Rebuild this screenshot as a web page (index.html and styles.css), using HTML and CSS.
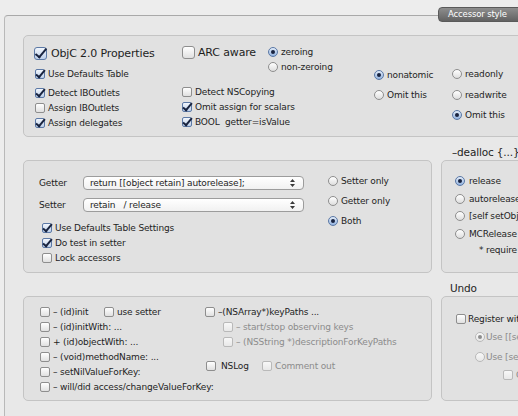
FILE: index.html
```html
<!DOCTYPE html>
<html lang="en">
<head>
    <meta charset="UTF-8">
    <title>Accessorizer - Accessor style</title>
    <link rel="stylesheet" href="styles.css">
</head>
<body>

<div class="window">
    <div class="tabview">
        <div class="tab">Accessor style</div>

        <div class="box b1">
            <div class="col col-a">
                <div class="row big"><span class="cb big on"></span>ObjC 2.0 Properties</div>
                <div class="row ind1 sp4"><span class="cb on"></span>Use Defaults Table</div>
                <div class="row ind1 sp4"><span class="cb on"></span>Detect IBOutlets</div>
                <div class="row ind1"><span class="cb"></span>Assign IBOutlets</div>
                <div class="row ind1"><span class="cb on"></span>Assign delegates</div>
            </div>
            <div class="col col-b">
                <div class="row big gap3"><span class="cb big"></span>ARC aware</div>
                <div class="row sp-b"><span class="cb"></span>Detect NSCopying</div>
                <div class="row"><span class="cb on"></span>Omit assign for scalars</div>
                <div class="row"><span class="cb on"></span>BOOL&nbsp; getter=isValue</div>
            </div>
            <div class="col col-c">
                <div class="row"><span class="rd on"></span>zeroing</div>
                <div class="row"><span class="rd"></span>non-zeroing</div>
            </div>
            <div class="col col-d">
                <div class="row r20"><span class="rd on"></span>nonatomic</div>
                <div class="row r20"><span class="rd"></span>Omit this</div>
            </div>
            <div class="col col-e">
                <div class="row r20"><span class="rd"></span>readonly</div>
                <div class="row r20"><span class="rd"></span>readwrite</div>
                <div class="row r20"><span class="rd on"></span>Omit this</div>
            </div>
        </div>

        <div class="cols">
            <div class="colL">
                <div class="title"></div>
                <div class="box b2">
                    <div class="b2-left">
                        <div class="field">
                            <span class="lbl">Getter</span>
                            <div class="popup">
                                <span>return [[object retain] autorelease];</span>
                                <svg width="5" height="8" viewBox="0 0 5 8"><path d="M2.5 0 5 3H0z M0 5h5L2.5 8z" fill="#3a3a3a"/></svg>
                            </div>
                        </div>
                        <div class="field">
                            <span class="lbl">Setter</span>
                            <div class="popup">
                                <span>retain&nbsp;&nbsp; / release</span>
                                <svg width="5" height="8" viewBox="0 0 5 8"><path d="M2.5 0 5 3H0z M0 5h5L2.5 8z" fill="#3a3a3a"/></svg>
                            </div>
                        </div>
                        <div class="checks">
                            <div class="row"><span class="cb on"></span>Use Defaults Table Settings</div>
                            <div class="row"><span class="cb on"></span>Do test in setter</div>
                            <div class="row"><span class="cb"></span>Lock accessors</div>
                        </div>
                    </div>
                    <div class="b2-right">
                        <div class="row r20"><span class="rd"></span>Setter only</div>
                        <div class="row r20"><span class="rd"></span>Getter only</div>
                        <div class="row r20"><span class="rd on"></span>Both</div>
                    </div>
                </div>

                <div class="title"></div>
                <div class="box b3">
                    <div class="col b3-a">
                        <div class="row"><span class="pair"><span class="cb"></span>– (id)init</span><span class="cb"></span>use setter</div>
                        <div class="row"><span class="cb"></span>– (id)initWith: ...</div>
                        <div class="row"><span class="cb"></span>+ (id)objectWith: ...</div>
                        <div class="row"><span class="cb"></span>– (void)methodName: ...</div>
                        <div class="row"><span class="cb"></span>– setNilValueForKey:</div>
                        <div class="row"><span class="cb"></span>– will/did access/changeValueForKey:</div>
                    </div>
                    <div class="col b3-b">
                        <div class="row"><span class="cb"></span>–(NSArray*)keyPaths ...</div>
                        <div class="row sub off"><span class="cb"></span>– start/stop observing keys</div>
                        <div class="row sub off"><span class="cb"></span>– (NSString *)descriptionForKeyPaths</div>
                        <div class="row nslog">
                            <span class="pair wide"><span class="cb"></span>NSLog</span>
                            <span class="pair off"><span class="cb"></span>Comment out</span>
                        </div>
                    </div>
                </div>
            </div>

            <div class="colR">
                <div class="title t-dealloc">–dealloc {...}</div>
                <div class="box b4">
                    <div class="row r17"><span class="rd on"></span>release</div>
                    <div class="row r17"><span class="rd"></span>autorelease</div>
                    <div class="row r17"><span class="rd"></span>[self setObj</div>
                    <div class="row r17"><span class="rd"></span>MCRelease</div>
                    <div class="row note">* require</div>
                </div>

                <div class="title">Undo</div>
                <div class="box b5">
                    <div class="row tight"><span class="cb"></span>Register wit</div>
                    <div class="row r20 off radio-sub"><span class="rd on"></span>Use [[se</div>
                    <div class="row r20 off radio-sub"><span class="rd"></span>Use [sel</div>
                    <div class="row off group"><span class="cb"></span>G</div>
                </div>
            </div>
        </div>
    </div>
</div>

</body>
</html>
```

FILE: styles.css
```css
* {
    box-sizing: border-box;
}
body {
    margin: 0;
    width: 518px;
    height: 416px;
    overflow: hidden;
    background-color: #ededed;
    font-family: "DejaVu Sans", sans-serif;
    font-size: 9px;
    letter-spacing: -0.15px;
    color: #1e1e1e;
}
.window {
    padding: 15px 0 0 4px;
}
.tabview {
    position: relative;
    width: 620px;
    height: 420px;
    border-top: 1px solid #a9a9a9;
    border-left: 1px solid #b9b9b9;
    border-top-left-radius: 4px;
    background-color: #e8e8e8;
    padding: 19px 0 0 18px;
}
.tab {
    position: absolute;
    top: -9px;
    left: 433px;
    width: 100px;
    height: 15px;
    border: 1px solid #5a5a5a;
    border-radius: 4px;
    background: linear-gradient(#8e8e8e, #626262);
    color: #fff;
    font-size: 8.5px;
    line-height: 13px;
    padding-left: 9px;
}
.box {
    border: 1px solid #c4c4c4;
    border-radius: 5px;
    background-color: #e1e1e1;
}

/* rows, checkboxes, radios */
.row {
    display: flex;
    align-items: center;
    height: 15px;
    gap: 3px;
    white-space: nowrap;
}
.row.big {
    height: 18px;
    font-size: 11px;
    gap: 4px;
}
.row.gap3 {
    gap: 3px;
}
.r20 {
    height: 20px;
}
.r17 {
    height: 17.5px;
}
.cb {
    position: relative;
    flex: none;
    width: 10px;
    height: 10px;
    border: 1px solid #8e8e8e;
    border-radius: 2px;
    background: linear-gradient(#ffffff, #e0e0e0);
}
.cb.big {
    width: 13px;
    height: 13px;
    border-radius: 3px;
}
.cb.on {
    border-color: #5c79a6;
    background: linear-gradient(#f2f6fc, #bccfea);
}
.cb.on::after {
    content: "";
    position: absolute;
    left: 2px;
    top: -2px;
    width: 3px;
    height: 8px;
    border: solid #18233f;
    border-width: 0 2px 2px 0;
    transform: rotate(40deg);
}
.cb.big.on::after {
    left: 3px;
    top: -2px;
    width: 4px;
    height: 10px;
    border-width: 0 2.5px 2.5px 0;
}
.rd {
    position: relative;
    flex: none;
    width: 10px;
    height: 10px;
    border: 1px solid #8e8e8e;
    border-radius: 50%;
    background: linear-gradient(#ffffff, #dedede);
}
.rd.on {
    border-color: #5a78a6;
    background: linear-gradient(#e2ecf9, #93b3df);
}
.rd.on::after {
    content: "";
    position: absolute;
    left: 2px;
    top: 2px;
    width: 4px;
    height: 4px;
    border-radius: 50%;
    background-color: #18233f;
}
.off {
    color: #8c8c8c;
}
.off .cb, .off .rd {
    border-color: #b9b9b9;
    background: linear-gradient(#f8f8f8, #e8e8e8);
}
.off .rd.on::after {
    background-color: #8d8d8d;
}

/* first box */
.b1 {
    width: 510px;
    height: 102px;
    display: flex;
    padding-left: 10px;
}
.col-a {
    width: 148px;
    padding-top: 8px;
}
.ind1 {
    padding-left: 1px;
}
.sp4 {
    margin-top: 4px;
}
.col-b {
    width: 86px;
    padding-top: 7px;
}
.sp-b {
    margin-top: 23.5px;
}
.col-c {
    width: 106px;
    padding-top: 8.5px;
}
.col-d {
    width: 78px;
    padding-top: 29px;
}
.col-e {
    padding-top: 28px;
}
.col-e .r20 {
    height: 20.5px;
}

/* lower columns */
.cols {
    display: flex;
    gap: 9px;
    margin-top: 6px;
}
.colL {
    flex: none;
    width: 409px;
}
.colR {
    flex: none;
    width: 200px;
}
.title {
    height: 17px;
    line-height: 18px;
    font-size: 10.5px;
    padding-left: 9px;
    margin-top: 6px;
}
.cols > div > .title:first-child {
    margin-top: 0;
}
.t-dealloc {
    padding-left: 11px;
}

.b2 {
    height: 113px;
    display: flex;
    padding-left: 15px;
}
.b2-left {
    width: 289px;
    padding-top: 15px;
}
.field {
    display: flex;
    align-items: center;
    height: 14px;
}
.field + .field {
    margin-top: 8px;
}
.lbl {
    width: 44px;
}
.popup {
    display: flex;
    align-items: center;
    justify-content: space-between;
    width: 221px;
    height: 14px;
    padding: 0 8px 0 6px;
    border: 1px solid #9c9c9c;
    border-radius: 4px;
    background: linear-gradient(#ffffff, #f1f1f1);
    font-size: 9px;
}
.checks {
    margin-top: 8.5px;
    padding-left: 3px;
}
.b2-right {
    padding-top: 10px;
}

.b4 {
    height: 113px;
    padding: 11.25px 0 0 13px;
}
.b4 .row {
    gap: 4px;
}
.b4 .note {
    padding-left: 24px;
}

.b3 {
    height: 105px;
    display: flex;
    padding: 7.5px 0 0 16px;
}
.b3-a {
    width: 165px;
}
.pair {
    display: flex;
    align-items: center;
    gap: 3px;
    width: 61px;
}
.sub {
    padding-left: 18px;
}
.nslog {
    margin-top: 9px;
    padding-left: 1px;
    gap: 0;
}
.pair.wide {
    width: 56px;
    gap: 5px;
}
.pair.off {
    width: auto;
}

.b5 {
    height: 105px;
    padding: 14.5px 0 0 14px;
}
.tight {
    gap: 2px;
}
.radio-sub {
    padding-left: 19px;
    gap: 1px;
}
.radio-sub:first-of-type {
    margin-top: 4px;
}
.group {
    margin-top: 0.5px;
    padding-left: 47px;
}
```
